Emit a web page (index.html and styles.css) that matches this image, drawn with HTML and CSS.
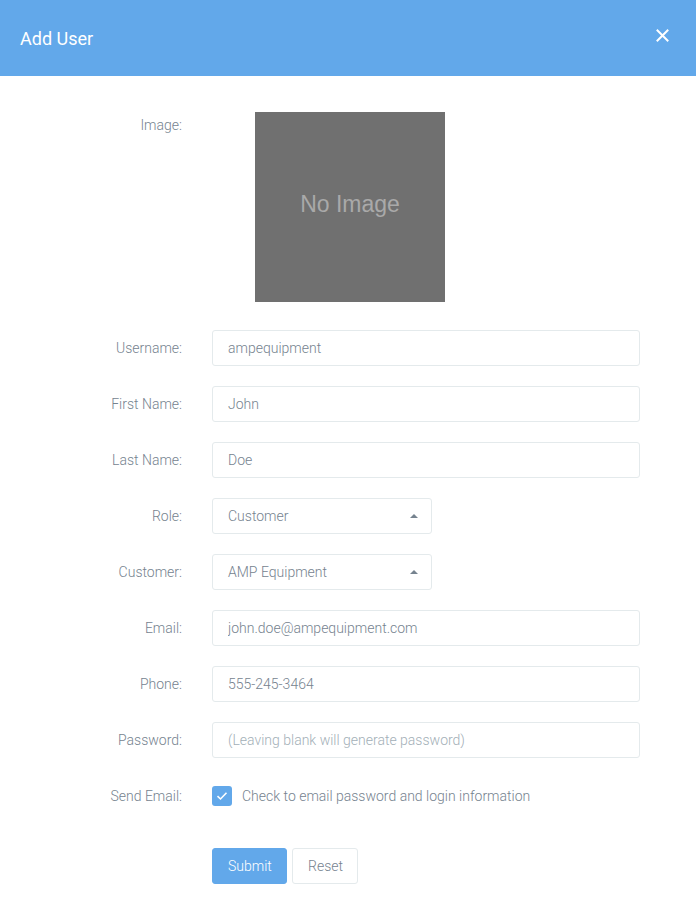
FILE: index.html
```html
<!DOCTYPE html>
<html>
<head>
<meta charset="utf-8">
<link rel="stylesheet" href="styles.css">
</head>
<body>
<div class="modal">
  <div class="modal-header">
    <h4 class="modal-title">Add User</h4>
    <button class="close" type="button" aria-label="Close">
      <svg width="13" height="13" viewBox="0 0 13 13"><path d="M1.5 1.5 L11.5 11.5 M11.5 1.5 L1.5 11.5" stroke="#fff" stroke-width="2" stroke-linecap="square" fill="none"/></svg>
    </button>
  </div>
  <form class="modal-body">
    <label class="lbl lbl-top">Image:</label>
    <div class="field"><div class="no-image">No Image</div></div>

    <label class="lbl">Username:</label>
    <div class="field"><input class="ctl" type="text" value="ampequipment"></div>

    <label class="lbl">First Name:</label>
    <div class="field"><input class="ctl" type="text" value="John"></div>

    <label class="lbl">Last Name:</label>
    <div class="field"><input class="ctl" type="text" value="Doe"></div>

    <label class="lbl">Role:</label>
    <div class="field"><div class="ctl sel"><span>Customer</span><span class="caret"></span></div></div>

    <label class="lbl">Customer:</label>
    <div class="field"><div class="ctl sel"><span>AMP Equipment</span><span class="caret"></span></div></div>

    <label class="lbl">Email:</label>
    <div class="field"><input class="ctl" type="text" value="john.doe@ampequipment.com"></div>

    <label class="lbl">Phone:</label>
    <div class="field"><input class="ctl" type="text" value="555-245-3464"></div>

    <label class="lbl">Password:</label>
    <div class="field"><input class="ctl" type="text" placeholder="(Leaving blank will generate password)"></div>

    <label class="lbl">Send Email:</label>
    <div class="field check-row">
      <span class="checkbox"><svg width="12" height="10" viewBox="0 0 12 10"><path d="M1.5 5.2 L4.5 8 L10.5 1.8" stroke="#fff" stroke-width="1.6" fill="none"/></svg></span>
      <span class="check-text">Check to email password and login information</span>
    </div>

    <div></div>
    <div class="field buttons">
      <button class="btn btn-primary" type="button">Submit</button>
      <button class="btn btn-default" type="button">Reset</button>
    </div>
  </form>
</div>
</body>
</html>
```

FILE: styles.css
```css
* { box-sizing: border-box; }
html, body { margin: 0; padding: 0; background: #fff; }
body { font-family: Roboto, "Noto Sans", sans-serif; color: #76838f; font-size: 14px; font-weight: 300; }

.modal { width: 696px; }

.modal-header {
  height: 76px;
  background: #62a8ea;
  display: flex;
  align-items: center;
  justify-content: space-between;
  padding: 0 26px 0 20px;
}
.modal-title {
  margin: 0;
  color: #fff;
  font-size: 18px;
  font-weight: 400;
  line-height: 1;
  padding-top: 2px;
}
.close {
  background: none;
  border: 0;
  padding: 0;
  width: 16px;
  height: 16px;
  display: flex;
  align-items: center;
  justify-content: center;
  margin-top: -5px;
}

.modal-body {
  display: grid;
  grid-template-columns: 182px 428px;
  column-gap: 30px;
  row-gap: 20px;
  padding: 36px 0 16px 0;
}

.lbl {
  text-align: right;
  line-height: 36px;
  font-size: 14px;
  color: #76838f;
}
.lbl-top { line-height: 26px; }

.field { min-height: 36px; }

.no-image {
  width: 190px;
  height: 190px;
  margin-left: 43px;
  margin-bottom: 8px;
  background: #707070;
  color: #a9a9a9;
  font-family: "Liberation Sans", Arial, sans-serif;
  font-weight: 400;
  font-size: 23px;
  display: flex;
  align-items: center;
  justify-content: center;
  padding-bottom: 6px;
}

.ctl {
  display: block;
  width: 428px;
  height: 36px;
  border: 1px solid #e4eaec;
  border-radius: 3px;
  padding: 0 15px;
  font-family: Roboto, "Noto Sans", sans-serif;
  font-weight: 300;
  font-size: 14px;
  color: #76838f;
  background: #fff;
  outline: none;
}
.ctl::placeholder { color: #a3afb7; }

.sel {
  width: 220px;
  display: flex;
  align-items: center;
  justify-content: space-between;
  padding-right: 13px;
}
.caret {
  width: 0;
  height: 0;
  border-left: 4px solid transparent;
  border-right: 4px solid transparent;
  border-bottom: 4px solid #76838f;
  margin-top: -1px;
}

.check-row {
  display: flex;
  align-items: center;
  gap: 10px;
}
.checkbox {
  width: 20px;
  height: 20px;
  border-radius: 3px;
  background: #62a8ea;
  display: flex;
  align-items: center;
  justify-content: center;
}
.check-text { font-size: 14px; color: #76838f; }

.buttons {
  display: flex;
  gap: 5px;
  margin-top: 14px;
}
.btn {
  height: 36px;
  border-radius: 3px;
  font-family: Roboto, "Noto Sans", sans-serif;
  font-weight: 300;
  font-size: 14px;
  padding: 0 15px;
  cursor: pointer;
}
.btn-primary {
  width: 75px;
  background: #62a8ea;
  border: 1px solid #62a8ea;
  color: #fff;
}
.btn-default {
  width: 66px;
  background: #fff;
  border: 1px solid #e4eaec;
  color: #76838f;
}
```
